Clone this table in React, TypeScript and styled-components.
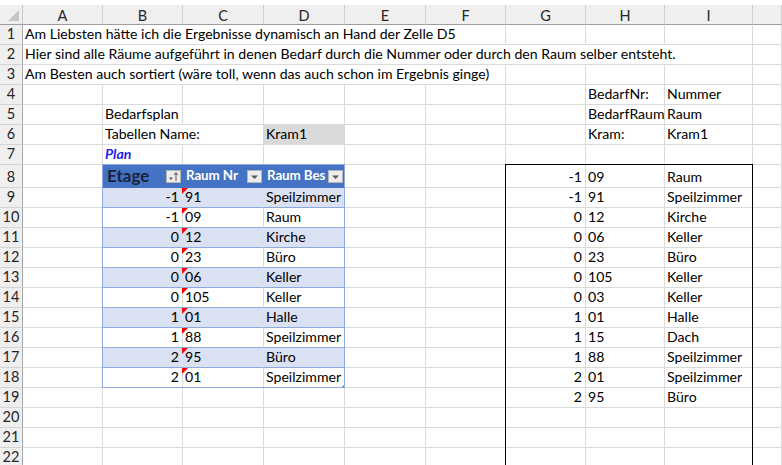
import React from 'react';
import styled, { createGlobalStyle } from 'styled-components';

const Global = createGlobalStyle`
  html, body { margin: 0; padding: 0; background: #ffffff; overflow: hidden; }
  #root { width: 782px; height: 465px; }
`;

const GRID = '#DADADA';
const HEAD_BG = '#EFEFEF';
const BLUE = '#4472C4';
const BAND = '#D9E1F2';
const BAND_LINE = '#8EA9DB';

const Sheet = styled.div`
  width: 782px;
  height: 465px;
  overflow: hidden;
  box-sizing: border-box;
  padding-top: 5px;
  display: grid;
  grid-template-columns: 23px 80px 80px 81px 81px 81px 80px 80px 79px 88px 1fr;
  grid-template-rows: repeat(8, 20px) 23px repeat(14, 20px);
  font-family: Lato, 'Open Sans', sans-serif;
  font-size: 14.1px;
  color: #000;
`;

const Corner = styled.div`
  grid-row: 1;
  grid-column: 1;
  position: relative;
  background: ${HEAD_BG};
  border-right: 1px solid #C8C8C8;
  border-bottom: 1px solid #9E9E9E;
  display: flex;
  align-items: flex-end;
  justify-content: flex-end;
  padding: 0 3px 3px 0;
`;

const SelectAll = styled.div`
  width: 0;
  height: 0;
  border-left: 11px solid transparent;
  border-bottom: 11px solid #C6C6C6;
`;

const ColHead = styled.div<{ $col: number }>`
  grid-row: 1;
  grid-column: ${(p) => p.$col};
  background: ${HEAD_BG};
  border-right: 1px solid #CFCFCF;
  border-bottom: 1px solid #9E9E9E;
  display: flex;
  align-items: center;
  justify-content: center;
  color: #262626;
  font-size: 14.5px;
  padding-top: 1px;
`;

const RowHead = styled.div<{ $row: number }>`
  grid-row: ${(p) => p.$row};
  grid-column: 1;
  background: ${HEAD_BG};
  border-right: 1px solid #A8A8A8;
  border-bottom: 1px solid #D4D4D4;
  display: flex;
  align-items: flex-end;
  justify-content: center;
  padding-bottom: 2px;
  line-height: 16px;
  color: #262626;
  font-size: 14.5px;
`;

type CellProps = {
  $row: number;
  $col: number;
  $span?: number;
  $fill?: string;
  $v?: string;
  $h?: string;
  $right?: boolean;
};

const Cell = styled.div<CellProps>`
  grid-row: ${(p) => p.$row};
  grid-column: ${(p) => p.$col} / span ${(p) => p.$span ?? 1};
  position: relative;
  min-width: 0;
  display: flex;
  align-items: flex-end;
  justify-content: ${(p) => (p.$right ? 'flex-end' : 'flex-start')};
  padding: 0 3px 2px 2px;
  background: ${(p) => p.$fill ?? 'transparent'};
  border-right: 1px solid ${(p) => p.$v ?? GRID};
  border-bottom: 1px solid ${(p) => p.$h ?? GRID};
  white-space: nowrap;
  line-height: 16px;
`;

const Text = styled.span<{ $plan?: boolean }>`
  font-weight: ${(p) => (p.$plan ? 700 : 400)};
  font-style: ${(p) => (p.$plan ? 'italic' : 'normal')};
  color: ${(p) => (p.$plan ? '#1F1FE6' : 'inherit')};
`;

const HeadCell = styled(Cell)`
  background: ${BLUE};
  border-right-color: ${BLUE};
  border-bottom-color: ${BLUE};
  align-items: flex-end;
  padding: 0 1px 4px 2px;
  gap: 1px;
`;

const HeadLabel = styled.span<{ $big?: boolean }>`
  flex: 1 1 auto;
  min-width: 0;
  font-weight: 700;
  color: ${(p) => (p.$big ? '#1A2236' : '#FFFFFF')};
  font-size: ${(p) => (p.$big ? '17px' : '13.4px')};
  letter-spacing: ${(p) => (p.$big ? '0' : '-0.1px')};
  line-height: ${(p) => (p.$big ? '18px' : '15px')};
  padding-left: ${(p) => (p.$big ? '2px' : '1px')};
  margin-bottom: ${(p) => (p.$big ? '-2px' : '0')};
`;

const FilterButton = styled.div`
  flex: none;
  width: 15px;
  height: 13px;
  box-sizing: border-box;
  background: #EDEDED;
  border: 1px solid #B5B5B5;
  display: flex;
  align-items: center;
  justify-content: center;
`;

const Marker = styled.span`
  position: absolute;
  top: 0;
  left: -1px;
  width: 0;
  height: 0;
  border-top: 6px solid #FF0000;
  border-right: 6px solid transparent;
`;

const Handle = styled.span`
  position: absolute;
  right: -1px;
  bottom: -1px;
  width: 4px;
  height: 4px;
  background: ${BLUE};
  clip-path: polygon(100% 0, 100% 100%, 0 100%);
`;

const Frame = styled.div<{ $r1: number; $r2: number; $c1: number; $c2: number; $color: string }>`
  grid-row: ${(p) => p.$r1} / ${(p) => p.$r2};
  grid-column: ${(p) => p.$c1} / ${(p) => p.$c2};
  position: relative;
  z-index: 3;
  margin: -1px 0 0 -1px;
  border: 1px solid ${(p) => p.$color};
  pointer-events: none;
`;

const LETTERS = ['A', 'B', 'C', 'D', 'E', 'F', 'G', 'H', 'I', 'J'];

type Def = { t: string; right?: boolean; span?: number; plan?: boolean; fill?: string };

const plain: Record<string, Def> = {
  A1: { t: 'Am Liebsten hätte ich die Ergebnisse dynamisch an Hand der Zelle D5', span: 6 },
  A2: {
    t: 'Hier sind alle Räume aufgeführt in denen Bedarf durch die Nummer oder durch den Raum selber entsteht.',
    span: 9,
  },
  A3: { t: 'Am Besten auch sortiert (wäre toll, wenn das auch schon im Ergebnis ginge)', span: 6 },
  H4: { t: 'BedarfNr:' },
  I4: { t: 'Nummer' },
  B5: { t: 'Bedarfsplan' },
  H5: { t: 'BedarfRaum' },
  I5: { t: 'Raum' },
  B6: { t: 'Tabellen Name:', span: 2 },
  D6: { t: 'Kram1', fill: '#D9D9D9' },
  H6: { t: 'Kram:' },
  I6: { t: 'Kram1' },
  B7: { t: 'Plan', plan: true },
};

const tableRows: [string, string, string][] = [
  ['-1', '91', 'Speilzimmer'],
  ['-1', '09', 'Raum'],
  ['0', '12', 'Kirche'],
  ['0', '23', 'Büro'],
  ['0', '06', 'Keller'],
  ['0', '105', 'Keller'],
  ['1', '01', 'Halle'],
  ['1', '88', 'Speilzimmer'],
  ['2', '95', 'Büro'],
  ['2', '01', 'Speilzimmer'],
];

const resultRows: [string, string, string][] = [
  ['-1', '09', 'Raum'],
  ['-1', '91', 'Speilzimmer'],
  ['0', '12', 'Kirche'],
  ['0', '06', 'Keller'],
  ['0', '23', 'Büro'],
  ['0', '105', 'Keller'],
  ['0', '03', 'Keller'],
  ['1', '01', 'Halle'],
  ['1', '15', 'Dach'],
  ['1', '88', 'Speilzimmer'],
  ['2', '01', 'Speilzimmer'],
  ['2', '95', 'Büro'],
];

const DropArrow = () => (
  <svg width="9" height="6" viewBox="0 0 9 6">
    <path d="M1 1.5 L8 1.5 L4.5 5 Z" fill="#5A5A5A" />
  </svg>
);

const SortArrow = () => (
  <svg width="11" height="11" viewBox="0 0 11 11">
    <path d="M1 6.5 L5 6.5 L3 9 Z" fill="#5A5A5A" />
    <path d="M8 10 L8 2" stroke="#5A5A5A" strokeWidth="1" />
    <path d="M6 4 L8 1.5 L10 4" stroke="#5A5A5A" strokeWidth="1" fill="none" />
  </svg>
);

function renderRow(r: number): React.ReactNode[] {
  const gridRow = r + 1;
  const out: React.ReactNode[] = [
    <RowHead key={`rh${r}`} $row={gridRow}>
      {r}
    </RowHead>,
  ];
  let c = 0;
  while (c < LETTERS.length) {
    const col = c + 2;
    const key = `${LETTERS[c]}${r}`;
    const inTable = r >= 8 && r <= 18 && c >= 1 && c <= 3;
    if (inTable && r === 8) {
      const labels = ['Etage', 'Raum Nr', 'Raum Bes'];
      out.push(
        <HeadCell key={key} $row={gridRow} $col={col}>
          <HeadLabel $big={c === 1}>{labels[c - 1]}</HeadLabel>
          <FilterButton>{c === 1 ? <SortArrow /> : <DropArrow />}</FilterButton>
        </HeadCell>
      );
      c += 1;
      continue;
    }
    if (inTable) {
      const row = tableRows[r - 9];
      const band = r % 2 === 1;
      const value = row[c - 1];
      out.push(
        <Cell
          key={key}
          $row={gridRow}
          $col={col}
          $right={c === 1}
          $fill={band ? BAND : undefined}
          $v={band ? BAND : GRID}
          $h={BAND_LINE}
        >
          {c === 2 && <Marker />}
          <Text>{value}</Text>
          {c === 3 && r === 18 && <Handle />}
        </Cell>
      );
      c += 1;
      continue;
    }
    const res = r >= 8 && r <= 19 && c >= 6 && c <= 8 ? resultRows[r - 8] : null;
    if (res) {
      out.push(
        <Cell key={key} $row={gridRow} $col={col} $right={c === 6}>
          <Text>{res[c - 6]}</Text>
        </Cell>
      );
      c += 1;
      continue;
    }
    const def = plain[key];
    if (def) {
      const span = def.span ?? 1;
      out.push(
        <Cell key={key} $row={gridRow} $col={col} $span={span} $fill={def.fill} $v={def.fill ?? GRID}>
          <Text $plan={def.plan}>{def.t}</Text>
        </Cell>
      );
      c += span;
      continue;
    }
    out.push(<Cell key={key} $row={gridRow} $col={col} />);
    c += 1;
  }
  return out;
}

export default function App() {
  const rows: React.ReactNode[] = [];
  for (let r = 1; r <= 22; r++) rows.push(...renderRow(r));
  return (
    <>
      <Global />
      <Sheet>
        <Corner>
          <SelectAll />
        </Corner>
        {LETTERS.map((l, i) => (
          <ColHead key={l} $col={i + 2}>
            {l === 'J' ? '' : l}
          </ColHead>
        ))}
        {rows}
        <Frame $r1={9} $r2={20} $c1={3} $c2={6} $color={BAND_LINE} />
        <Frame $r1={9} $r2={24} $c1={8} $c2={11} $color="#000000" />
      </Sheet>
    </>
  );
}
